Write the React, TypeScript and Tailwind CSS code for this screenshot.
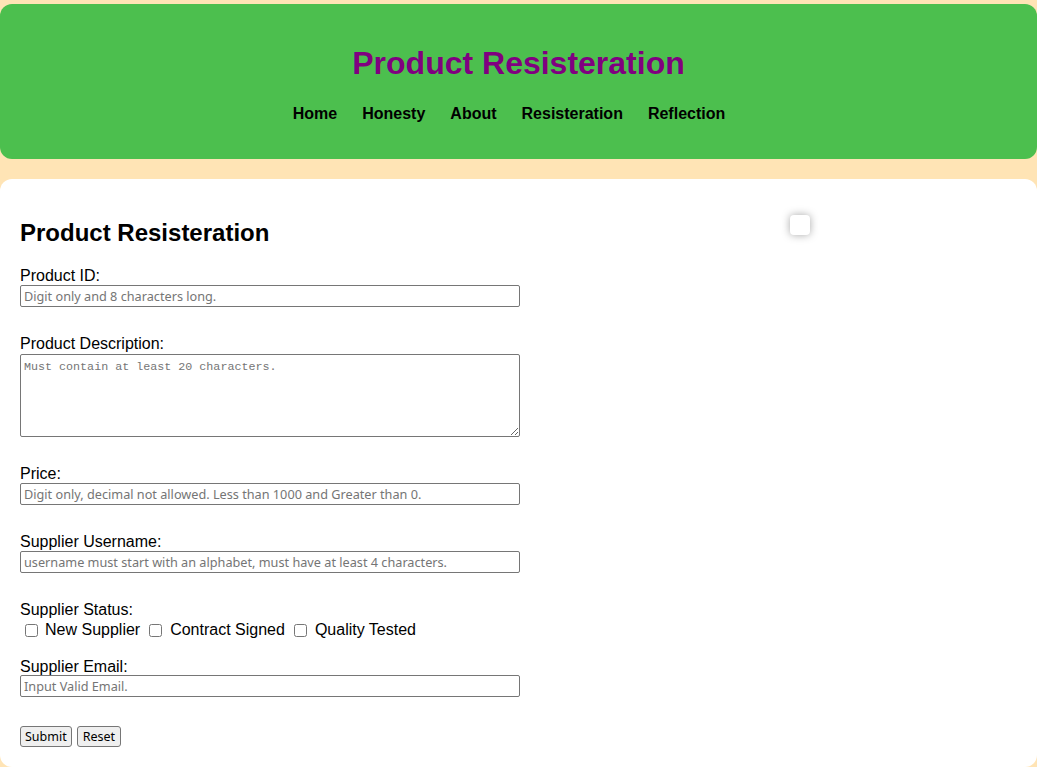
import React from "react";

const inputCls =
  "block w-[500px] h-[22px] border border-[#767676] rounded-[2px] px-[3px] text-[12.7px] text-black placeholder:text-[#757575] bg-white outline-none [font-family:'Noto_Sans',sans-serif]";

function Label({ children }: { children: React.ReactNode }) {
  return <label className="block text-[16px] leading-[18px] text-black">{children}</label>;
}

export default function App() {
  return (
    <div className="min-h-[767px] overflow-hidden bg-[#ffe4b5] pt-[4px] [font-family:'Liberation_Sans',Arial,sans-serif]">
      <header className="h-[155px] bg-[#4cbf4e] rounded-[12px] flex flex-col items-center">
        <h1 className="mt-[41px] text-[32px] leading-[37px] font-bold text-[#800080]">Product Resisteration</h1>
        <nav className="mt-[23px] flex gap-[25px] pr-[19px] text-[16px] leading-[18px] font-bold text-black">
          <a>Home</a>
          <a>Honesty</a>
          <a>About</a>
          <a>Resisteration</a>
          <a>Reflection</a>
        </nav>
      </header>
      <main className="relative mt-[20px] bg-white rounded-[12px] h-[588px] pl-[20px] pt-[40px]">
        <div className="absolute left-[790px] top-[36px] w-[20px] h-[20px] bg-white rounded-[4px] shadow-[0_0_8px_rgba(0,0,0,0.35)]" />
        <h2 className="text-[24px] leading-[28px] font-bold text-black">Product Resisteration</h2>
        <div className="mt-[20px]">
          <Label>Product ID:</Label>
          <input className={inputCls} placeholder="Digit only and 8 characters long." />
        </div>
        <div className="mt-[28px]">
          <Label>Product Description:</Label>
          <textarea
            className="block mt-[1px] w-[500px] h-[83px] border border-[#767676] rounded-[2px] px-[3px] pt-[5px] pb-[2px] text-[11.7px] leading-[14px] placeholder:text-[#757575] [font-family:'Liberation_Mono',monospace] outline-none resize"
            placeholder="Must contain at least 20 characters."
          />
        </div>
        <div className="mt-[28px]">
          <Label>Price:</Label>
          <input className={inputCls} placeholder="Digit only, decimal not allowed. Less than 1000 and Greater than 0." />
        </div>
        <div className="mt-[28px]">
          <Label>Supplier Username:</Label>
          <input className={inputCls} placeholder="username must start with an alphabet, must have at least 4 characters." />
        </div>
        <div className="mt-[28px]">
          <Label>Supplier Status:</Label>
          <div className="flex items-center text-[16px] leading-[20px] mt-[1px]">
            <input type="checkbox" className="ml-[5px] mr-[7px] w-[13px] h-[13px]" />
            <span>New Supplier</span>
            <input type="checkbox" className="ml-[9px] mr-[8px] w-[13px] h-[13px]" />
            <span>Contract Signed</span>
            <input type="checkbox" className="ml-[9px] mr-[8px] w-[13px] h-[13px]" />
            <span>Quality Tested</span>
          </div>
        </div>
        <div className="mt-[18px]">
          <Label>Supplier Email:</Label>
          <input className={inputCls + " -mt-[1px]"} placeholder="Input Valid Email." />
        </div>
        <div className="mt-[29px] flex gap-[5px]">
          <button className="h-[21px] px-[4px] bg-[#efefef] border border-[#767676] rounded-[3px] text-[12.5px] text-black [font-family:'Noto_Sans',sans-serif] leading-[19px]">Submit</button>
          <button className="h-[21px] px-[5px] bg-[#efefef] border border-[#767676] rounded-[3px] text-[12.5px] text-black [font-family:'Noto_Sans',sans-serif] leading-[19px]">Reset</button>
        </div>
      </main>
    </div>
  );
}
